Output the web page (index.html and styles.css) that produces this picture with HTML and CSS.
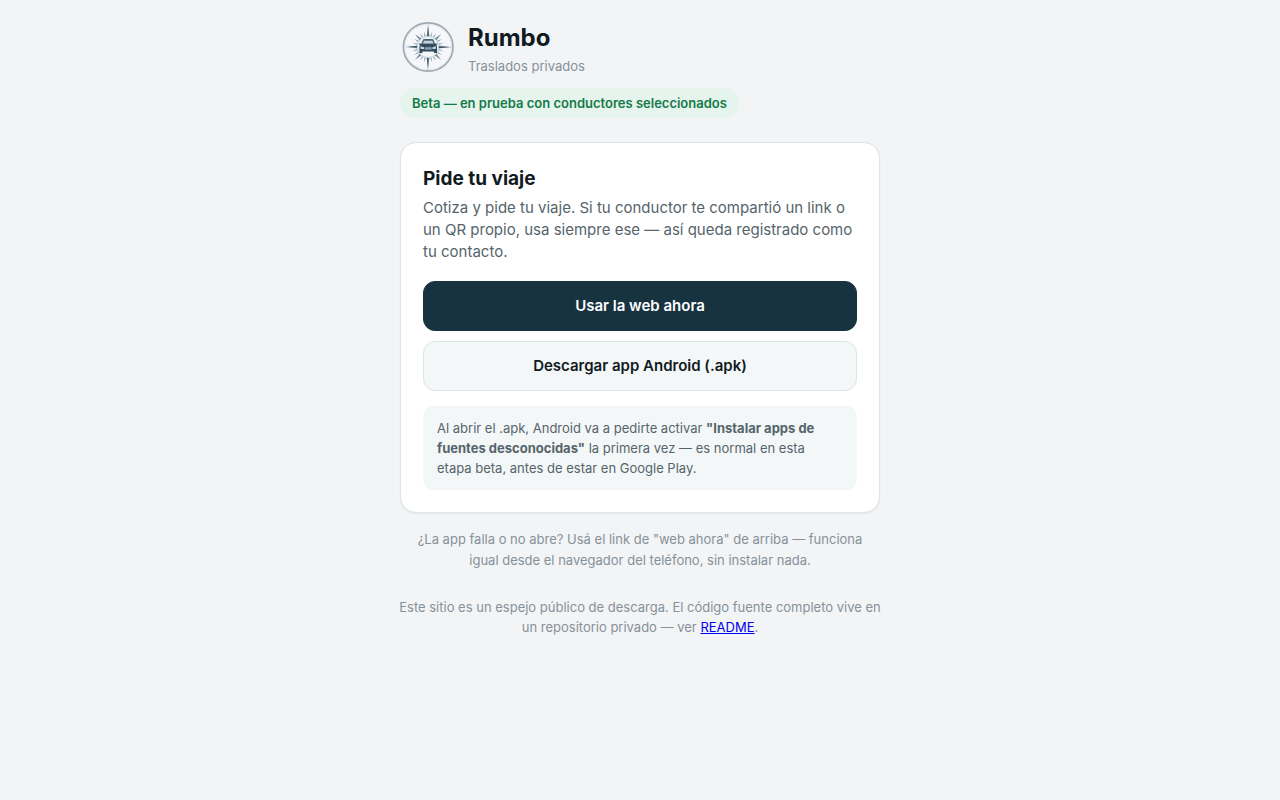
FILE: index.html
```html
<!DOCTYPE html>
<html lang="es">
<head>
    <meta charset="UTF-8">
    <meta name="viewport" content="width=device-width, initial-scale=1.0">
    <title>Rumbo — Traslados privados</title>
    <link rel="stylesheet" href="styles.css">
</head>
<body>

<div class="container">
    <header class="header">
        <svg class="logo" viewBox="0 0 56 56" role="img" aria-label="Rumbo">
            <!-- Aro -->
            <ellipse cx="28.2" cy="28" rx="24.8" ry="24.1" fill="#f5f7fa" stroke="#a0aab2" stroke-width="1.7"/>
            <ellipse cx="28.2" cy="28" rx="23.3" ry="22.6" fill="none" stroke="#d9dfe4" stroke-width="0.6"/>
            <!-- Rayos -->
            <g fill="#91a4b2">
                <path id="ray" d="M27.2 17L28 12L28.8 17Z" transform="rotate(15 28 28)"/>
                <use href="#ray" transform="rotate(15 28 28)"/>
                <use href="#ray" transform="rotate(45 28 28)"/>
                <use href="#ray" transform="rotate(60 28 28)"/>
                <use href="#ray" transform="rotate(90 28 28)"/>
                <use href="#ray" transform="rotate(105 28 28)"/>
                <use href="#ray" transform="rotate(135 28 28)"/>
                <use href="#ray" transform="rotate(150 28 28)"/>
                <use href="#ray" transform="rotate(180 28 28)"/>
                <use href="#ray" transform="rotate(195 28 28)"/>
                <use href="#ray" transform="rotate(225 28 28)"/>
                <use href="#ray" transform="rotate(240 28 28)"/>
                <use href="#ray" transform="rotate(270 28 28)"/>
                <use href="#ray" transform="rotate(285 28 28)"/>
                <use href="#ray" transform="rotate(315 28 28)"/>
                <use href="#ray" transform="rotate(330 28 28)"/>
            </g>
            <!-- Diagonales -->
            <g fill="#6d8394">
                <path d="M34.6 19.8L41.2 15L36.2 21.4Z"/>
                <path d="M36.2 34.6L41.2 41L34.6 36.2Z"/>
                <path d="M21.4 36.2L15 41L19.8 34.6Z"/>
                <path d="M19.8 21.4L15 15L21.4 19.8Z"/>
            </g>
            <!-- Puntas de la brújula -->
            <path d="M28 8L29.6 18H26.4Z M49 28L38 29.8V26.2Z M28 49L26.4 38H29.6Z M8 28L18 26.2V29.8Z" fill="#93a4b0"/>
            <path d="M28 4.5L28.9 18H27.4Z M52.5 28L38 29.1V27.4Z M28 52L27.1 38H28.6Z M4.5 28L18 26.9V28.6Z" fill="#2c4050"/>
            <circle cx="28" cy="28" r="10.6" fill="#f3f6f8" stroke="#c0ced8" stroke-width="0.9"/>
            <!-- Auto -->
            <path d="M22.6 21.4Q23 20 24.4 20H32Q33.4 20 33.8 21.4L35.4 25.4H21Z" fill="#4b6275"/>
            <path d="M24 21.7H32.4L33.5 24.6H22.9Z" fill="#c5d2dc"/>
            <path d="M19 24.4H21L21.6 25.1H34.8L35.4 24.4H37.4V25.6H36.2L37 27.4V34H34V32.4H22.4V34H19.4V27.4L20.2 25.6H19Z" fill="#334b5d"/>
            <path d="M20.4 27.3L24 28.3V30H20.8Z M36 27.3L32.4 28.3V30H35.6Z" fill="#c9d8e2"/>
            <path d="M24.8 28.2H31.6V30.6H24.8Z" fill="#8da2b2"/>
        </svg>
        <div>
            <h1>Rumbo</h1>
            <p class="subtitle">Traslados privados</p>
        </div>
    </header>

    <span class="badge">Beta — en prueba con conductores seleccionados</span>

    <main class="card">
        <h2>Pide tu viaje</h2>
        <p class="description">Cotiza y pide tu viaje. Si tu conductor te compartió un link o un QR propio, usa siempre ese — así queda registrado como tu contacto.</p>
        <a class="button primary" href="#">Usar la web ahora</a>
        <a class="button secondary" href="#">Descargar app Android (.apk)</a>
        <p class="note">Al abrir el .apk, Android va a pedirte activar <strong>"Instalar apps de fuentes desconocidas"</strong> la primera vez — es normal en esta etapa beta, antes de estar en Google Play.</p>
    </main>

    <p class="help">¿La app falla o no abre? Usá el link de "web ahora" de arriba — funciona igual desde el navegador del teléfono, sin instalar nada.</p>

    <footer class="footer">Este sitio es un espejo público de descarga. El código fuente completo vive en un repositorio privado — ver <a href="#">README</a>.</footer>
</div>

</body>
</html>
```
FILE: styles.css
```css
* {
    box-sizing: border-box;
}
body {
    margin: 0;
    padding: 19px 20px 40px;
    font-family: Inter, "Liberation Sans", sans-serif;
    background-color: #f2f4f6;
    color: #101a20;
}
h1, h2, p {
    margin: 0;
}
.container {
    max-width: 480px;
    margin: 0 auto;
}
.header {
    display: flex;
    align-items: flex-start;
    gap: 12px;
    margin-bottom: 12px;
}
.logo {
    width: 56px;
    height: 56px;
    flex-shrink: 0;
}
h1 {
    font-size: 24px;
    line-height: 37px;
}
.subtitle {
    font-size: 13px;
    line-height: 20px;
    color: #879199;
}
.badge {
    display: inline-block;
    padding: 5px 12px;
    border-radius: 999px;
    background-color: #e5f4ec;
    color: #147a48;
    font-size: 13px;
    font-weight: 600;
    line-height: 20px;
}
.card {
    margin-top: 24px;
    padding: 22px;
    background-color: white;
    border: 1px solid #dde5e8;
    border-radius: 16px;
    box-shadow: 0 1px 2px rgba(16, 26, 32, 0.06);
}
h2 {
    font-size: 19px;
    line-height: 28px;
    margin-bottom: 4px;
}
.description {
    font-size: 15px;
    line-height: 22px;
    color: #56646b;
    margin-bottom: 18px;
}
.button {
    display: block;
    padding: 13px;
    border: 1px solid #17333f;
    border-radius: 12px;
    font-size: 15px;
    font-weight: 600;
    line-height: 22px;
    text-align: center;
    text-decoration: none;
}
.primary {
    background-color: #17333f;
    color: white;
    margin-bottom: 10px;
}
.secondary {
    background-color: #f3f7f8;
    border-color: #dde5e8;
    color: #101a20;
}
.note {
    margin-top: 15px;
    padding: 12px 14px;
    border-radius: 10px;
    background-color: #f3f7f8;
    color: #56646b;
    font-size: 13px;
    line-height: 20px;
}
.help {
    margin-top: 16px;
    padding: 0 8px;
    font-size: 13px;
    line-height: 21px;
    text-align: center;
    color: #879199;
}
/* El pie sobresale un poco de la tarjeta */
.footer {
    margin: 26px -8px 0;
    font-size: 13px;
    line-height: 20px;
    text-align: center;
    color: #879199;
}
.footer a {
    color: #0000ee;
}
```
